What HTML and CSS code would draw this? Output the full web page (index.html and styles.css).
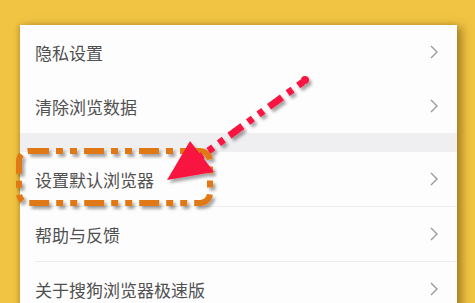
FILE: index.html
```html
<!DOCTYPE html>
<html lang="zh">
<head>
<meta charset="utf-8">
<link rel="stylesheet" href="styles.css">
</head>
<body>
<div class="page">
  <div class="card">
    <div class="row"><span class="label">隐私设置</span><svg class="chev" viewBox="0 0 8 14"><polyline points="1,1 7,7 1,13"/></svg></div>
    <div class="row"><span class="label">清除浏览数据</span><svg class="chev" viewBox="0 0 8 14"><polyline points="1,1 7,7 1,13"/></svg></div>
    <div class="band"></div>
    <div class="row sep"><span class="label">设置默认浏览器</span><svg class="chev" viewBox="0 0 8 14"><polyline points="1,1 7,7 1,13"/></svg></div>
    <div class="row sep"><span class="label">帮助与反馈</span><svg class="chev" viewBox="0 0 8 14"><polyline points="1,1 7,7 1,13"/></svg></div>
    <div class="row"><span class="label">关于搜狗浏览器极速版</span><svg class="chev" viewBox="0 0 8 14"><polyline points="1,1 7,7 1,13"/></svg></div>
  </div>
  <svg class="overlay" viewBox="0 0 475 303" width="475" height="303">
    <defs>
      <filter id="sh" x="-10%" y="-10%" width="130%" height="140%">
        <feDropShadow dx="2.5" dy="3" stdDeviation="1.6" flood-color="#000" flood-opacity="0.35"/>
      </filter>
    </defs>
    <g filter="url(#sh)">
      <rect class="box" x="19" y="151" width="191" height="52" rx="10"/>
      <line class="arrow" x1="303" y1="82" x2="200" y2="157"/>
      <circle cx="305" cy="80" r="4" fill="#f8163f"/>
      <polygon points="167,180 190,141 214,172" fill="#f8163f"/>
    </g>
  </svg>
</div>
</body>
</html>
```

FILE: styles.css
```css
html, body {
  margin: 0;
  padding: 0;
}
body {
  background: #f2c443;
  width: 475px;
  height: 303px;
  overflow: hidden;
  font-family: "Noto Sans CJK SC", "Noto Sans", sans-serif;
}
.page {
  position: relative;
  width: 475px;
  height: 303px;
  padding-top: 25px;
  padding-left: 20px;
  box-sizing: border-box;
}
.card {
  width: 437px;
  background: #fdfdfd;
  box-shadow: 5px 2px 9px rgba(90, 60, 0, 0.5), -2px 0 4px rgba(120, 80, 0, 0.25);
  display: flex;
  flex-direction: column;
}
.row {
  height: 54px;
  display: flex;
  align-items: center;
  justify-content: space-between;
  padding: 0 19px 0 15px;
  position: relative;
}
.row.sep {
  border-bottom: 1px solid #ededed;
  margin-left: 15px;
  padding-left: 0;
}
.label {
  font-size: 17px;
  color: #505050;
  letter-spacing: 0;
}
.chev {
  width: 8px;
  height: 14px;
  fill: none;
  stroke: #9a9a9a;
  stroke-width: 1.4;
}
.band {
  height: 19px;
  background: #efeef1;
}
.overlay {
  position: absolute;
  left: 0;
  top: 0;
  pointer-events: none;
}
.box {
  fill: none;
  stroke: #e07812;
  stroke-width: 6;
  stroke-dasharray: 20 7 7 7 7 7;
}
.arrow {
  stroke: #f8163f;
  stroke-width: 7;
  stroke-dasharray: 6 7 6 7 16 7;
}
```
